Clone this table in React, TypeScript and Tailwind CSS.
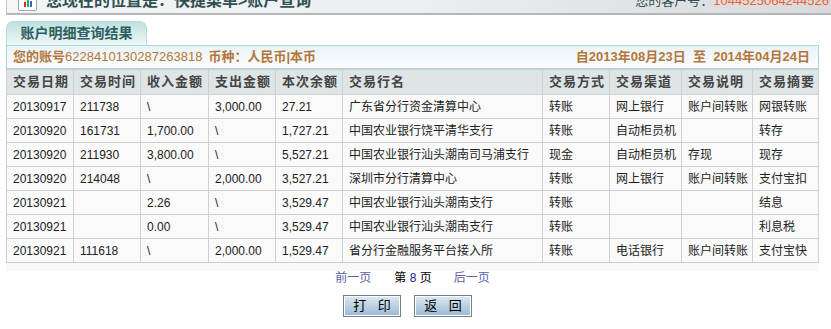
const cols = [67, 67, 68, 67, 67, 200, 67, 72, 71, 66];
const heads = ["交易日期", "交易时间", "收入金额", "支出金额", "本次余额", "交易行名", "交易方式", "交易渠道", "交易说明", "交易摘要"];

const rows = [
  ["20130917", "211738", "\\", "3,000.00", "27.21", "广东省分行资金清算中心", "转账", "网上银行", "账户间转账", "网银转账"],
  ["20130920", "161731", "1,700.00", "\\", "1,727.21", "中国农业银行饶平清华支行", "转账", "自动柜员机", "", "转存"],
  ["20130920", "211930", "3,800.00", "\\", "5,527.21", "中国农业银行汕头潮南司马浦支行", "现金", "自动柜员机", "存现", "现存"],
  ["20130920", "214048", "\\", "2,000.00", "3,527.21", "深圳市分行清算中心", "转账", "网上银行", "账户间转账", "支付宝扣"],
  ["20130921", "", "2.26", "\\", "3,529.47", "中国农业银行汕头潮南支行", "转账", "", "", "结息"],
  ["20130921", "", "0.00", "\\", "3,529.47", "中国农业银行汕头潮南支行", "转账", "", "", "利息税"],
  ["20130921", "111618", "\\", "2,000.00", "1,529.47", "省分行金融服务平台接入所", "转账", "电话银行", "账户间转账", "支付宝快"],
];

const font = { fontFamily: '"Liberation Sans", "Noto Sans CJK SC", sans-serif' };

export default function App() {
  return (
    <div className="w-[831px] h-[329px] bg-white overflow-hidden" style={font}>
      {/* location bar */}
      <div className="ml-[6px] h-[15px] overflow-hidden border-b-2 border-[#b4b6b8] bg-gradient-to-r from-[#f3f5f6] via-[#eceef0] to-[#d6dadd] border-l border-l-[#c8cacc]">
        <div className="flex items-center -mt-[11px] h-[24px]">
          <div className="ml-[11px] w-[19px] h-[19px] border border-[#9aa] bg-white rounded-[2px] flex items-end justify-center gap-[1px] pb-[3px]">
            <span className="w-[2px] h-[5px] bg-[#e23]" />
            <span className="w-[2px] h-[8px] bg-[#3a6]" />
            <span className="w-[2px] h-[6px] bg-[#36c]" />
          </div>
          <span className="ml-[9px] text-[16px] font-bold text-[#2f4f4f]">您现在的位置是：快捷菜单&gt;账户查询</span>
          <span className="ml-auto text-[13px] text-[#2f4f4f]">您的客户号：</span>
          <span className="mr-[2px] text-[13px] text-[#f2602a]">1044525064244526</span>
        </div>
      </div>

      {/* tab */}
      <div className="ml-[6px] mt-[6px] w-[141px] h-[24px] rounded-t-[7px] border border-b-0 border-[#b8dcdc] bg-gradient-to-b from-[#bfe0e0] to-[#eef7f7] flex items-center justify-center">
        <span className="text-[14px] font-bold text-[#2d5e5e]">账户明细查询结果</span>
      </div>

      {/* account info */}
      <div className="ml-[6px] w-[813px] h-[24px] border border-[#a9d8d8] bg-gradient-to-b from-[#e9f3f8] to-[#fbfdfe] flex items-center px-[6px] text-[13px] text-[#b5763a]">
        <span className="font-bold">您的账号</span>
        <span>6228410130287263818</span>
        <span className="font-bold ml-[6px]">币种：人民币|本币</span>
        <span className="ml-auto font-bold mr-[2px]">自2013年08月23日&nbsp;&nbsp;至&nbsp;&nbsp;2014年04月24日</span>
      </div>

      {/* table */}
      <table className="ml-[6px] w-[813px] table-fixed border-collapse border border-[#c4c4c4]">
        <colgroup>
          {cols.map((w, i) => (
            <col key={i} style={{ width: w }} />
          ))}
        </colgroup>
        <thead>
          <tr className="h-[25px] bg-[#dfe4e7]">
            {heads.map((h) => (
              <th key={h} className="border border-[#cfcfcf] text-left pl-[6px] text-[13px] font-bold tracking-[1px] text-[#444] whitespace-nowrap">
                {h}
              </th>
            ))}
          </tr>
        </thead>
        <tbody>
          {rows.map((r, i) => (
            <tr key={i} className="h-[24px] bg-[#fafafa]">
              {r.map((c, j) => (
                <td key={j} className="border border-[#cfcfcf] pl-[6px] text-[12px] text-[#222] whitespace-nowrap overflow-hidden">
                  {c}
                </td>
              ))}
            </tr>
          ))}
        </tbody>
      </table>
      <div className="ml-[6px] w-[813px] h-[8px] bg-[#f8f8f8]" />

      {/* pager */}
      <div className="w-[825px] h-[14px] flex items-center justify-center text-[12px]">
        <span className="text-[#5b5fa8]">前一页</span>
        <span className="ml-[23px] text-black">第 <span className="text-[#1a1aa0]">8</span> 页</span>
        <span className="ml-[22px] text-[#5b5fa8]">后一页</span>
      </div>

      {/* buttons */}
      <div className="w-[815px] mt-[10px] flex justify-center gap-[13px]">
        <button className="w-[58px] h-[22px] border border-[#6f8090] shadow-[inset_0_0_0_1px_#ffffff] bg-gradient-to-b from-[#dde9f2] to-[#9ab9d3] text-[13px] text-black tracking-[4px] pl-[4px]">
          打 印
        </button>
        <button className="w-[58px] h-[22px] border border-[#6f8090] shadow-[inset_0_0_0_1px_#ffffff] bg-gradient-to-b from-[#dde9f2] to-[#9ab9d3] text-[13px] text-black tracking-[4px] pl-[4px]">
          返 回
        </button>
      </div>
    </div>
  );
}
